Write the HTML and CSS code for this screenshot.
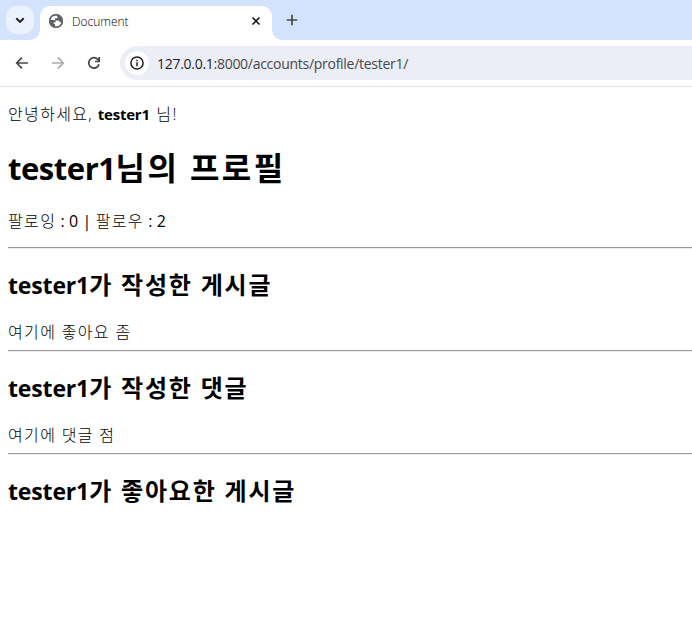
FILE: index.html
```html
<!DOCTYPE html>
<html lang="ko">
<head>
<meta charset="utf-8">
<title>Document</title>
<link rel="stylesheet" href="styles.css">
</head>
<body>
<header class="browser">
  <div class="tabs">
    <button class="search-tabs" aria-label="Tabs"><svg width="28" height="28" viewBox="0 0 28 28"><path d="M10.3 12.3 14 15.9l3.7-3.6" fill="none" stroke="#1f1f1f" stroke-width="2"/></svg></button>
    <div class="tab">
      <svg class="globe" width="16" height="16" viewBox="0 0 16 16"><circle cx="8" cy="8" r="7" fill="#5f6368"/><path d="M8.600 2.300C5.500 1.600 2.700 3.500 2.300 6.900H5.500c1.600 0 2.300.8 2.300 2.300H5.800v1.800h1.300v2.700c3.300.5 6-1.600 6.500-4.500h-1.800c-.3-1.300-1-1.800-2.300-1.800H6.900V5.300h1.700c.8 0 .9-.7.9-1.600z" fill="#fff"/><circle cx="8" cy="8" r="6.300" fill="none" stroke="#5f6368" stroke-width="1.500"/></svg>
      <span class="tab-title">Document</span>
      <svg class="close" width="16" height="16" viewBox="0 0 16 16"><path d="m4.500 4.500 7 7m0-7-7 7" stroke="#1f1f1f" stroke-width="1.700"/></svg>
    </div>
    <svg class="new-tab" width="16" height="16" viewBox="0 0 16 16"><path d="M8 2.800v10.400M2.800 8h10.400" stroke="#474747" stroke-width="1.700"/></svg>
  </div>
  <div class="toolbar">
    <svg width="16" height="16" viewBox="0 0 16 16"><path d="M13.900 8H3m5-5.300L2.700 8 8 13.300" fill="none" stroke="#474747" stroke-width="1.700"/></svg>
    <svg width="16" height="16" viewBox="0 0 16 16"><path d="M2.100 8H13M8 2.700 13.300 8 8 13.300" fill="none" stroke="#ababab" stroke-width="1.700"/></svg>
    <svg width="16" height="16" viewBox="0 0 16 16"><path d="M13 9.200A5.200 5.200 0 1 1 11.900 4.500L13 6M13.200 2v4.500H8.800" fill="none" stroke="#474747" stroke-width="1.700"/></svg>
    <div class="address">
      <span class="info"><svg width="16" height="16" viewBox="0 0 16 16"><circle cx="8" cy="8" r="6.100" fill="none" stroke="#1f1f1f" stroke-width="1.500"/><path d="M8 7.200v4.100M8 4.700v1.500" stroke="#1f1f1f" stroke-width="1.500"/></svg></span>
      <span class="url"><span class="host">127.0.0.1</span>:8000/accounts/profile/tester1/</span>
    </div>
  </div>
</header>
<main>
  <p>안녕하세요, <b>tester1</b> 님!</p>
  <h1><span class="name">tester1</span>님의 프로필</h1>
  <p class="follows">팔로잉<span class="count"> : 0 | </span>팔로우<span class="count"> : 2</span></p>
  <hr>
  <h2><span class="name">tester1</span>가 작성한 게시글</h2>
  <div class="note">여기에 좋아요 좀</div>
  <hr>
  <h2><span class="name">tester1</span>가 작성한 댓글</h2>
  <div class="note">여기에 댓글 점</div>
  <hr>
  <h2><span class="name">tester1</span>가 좋아요한 게시글</h2>
</main>
</body>
</html>
```

FILE: styles.css
```css
* { box-sizing: border-box; }
body {
  margin: 0;
  background: #fff;
  color: #000;
  font: 300 16px/21px "Open Sans", "Noto Sans CJK KR", sans-serif;
  overflow: hidden;
}
svg { display: block; flex: none; }
.tabs {
  display: flex;
  height: 40px;
  padding: 6px 0 0 6px;
  background: #d3e3fd;
}
.search-tabs {
  width: 28px;
  height: 28px;
  padding: 0;
  border: 0;
  border-radius: 10px;
  background: #ebf2fe;
}
.tab {
  position: relative;
  display: flex;
  align-items: center;
  width: 232px;
  height: 34px;
  margin-left: 6px;
  padding: 0 8px 5px;
  border-radius: 10px 10px 0 0;
  background: #fff;
}
.tab::before, .tab::after {
  content: "";
  position: absolute;
  bottom: 0;
  width: 10px;
  height: 10px;
}
.tab::before { left: -10px; background: radial-gradient(circle at 0 0, transparent 9.5px, #fff 10px); }
.tab::after { right: -10px; background: radial-gradient(circle at 100% 0, transparent 9.5px, #fff 10px); }
.tab-title { margin: 2px 0 0 8px; color: #000; font-size: 12px; line-height: 16px; }
.close { margin-left: auto; }
.new-tab { margin: 6px 0 0 12px; }
.toolbar {
  display: flex;
  align-items: center;
  gap: 20px;
  height: 47px;
  padding-left: 14px;
  border-bottom: 1px solid #dedfe1;
  background: #fff;
}
.address {
  display: flex;
  align-items: center;
  flex: 1;
  height: 34px;
  margin-left: -2px;
  padding-left: 5px;
  border-radius: 17px 0 0 17px;
  background: #ebeef7;
}
.info {
  display: grid;
  place-items: center;
  width: 24px;
  height: 24px;
  border-radius: 50%;
  background: #fff;
}
.url { margin-left: 8px; color: #474747; font-size: 14px; font-weight: 400; letter-spacing: -.28px; }
.host { color: #1f1f1f; }
main { padding: 17px 0 0 8px; letter-spacing: 1.35px; }
main p { margin: 0; }
main b { font-weight: 700; font-size: 15px; letter-spacing: -.2px; margin: 0 1px 0 -1px; }
h1, h2 { font-weight: 700; }
h1 { margin: 21.4px 0 21px; font-size: 32px; line-height: 43px; letter-spacing: 2.4px; }
h2 { margin: 20px 0; font-size: 24px; line-height: 32px; letter-spacing: 1.800px; }
h1 .name { font-size: 31px; letter-spacing: -.45px; }
h2 .name { font-size: 23px; letter-spacing: -.15px; }
.count { font-weight: 400; letter-spacing: .1px; }
.follows { margin-bottom: 15px; }
.note { margin-bottom: -1px; padding-top: 1px; }
hr { height: 2px; margin: 8px 0; border: solid; border-width: 1px 0; border-color: #9a9a9a transparent #eee; }
```
